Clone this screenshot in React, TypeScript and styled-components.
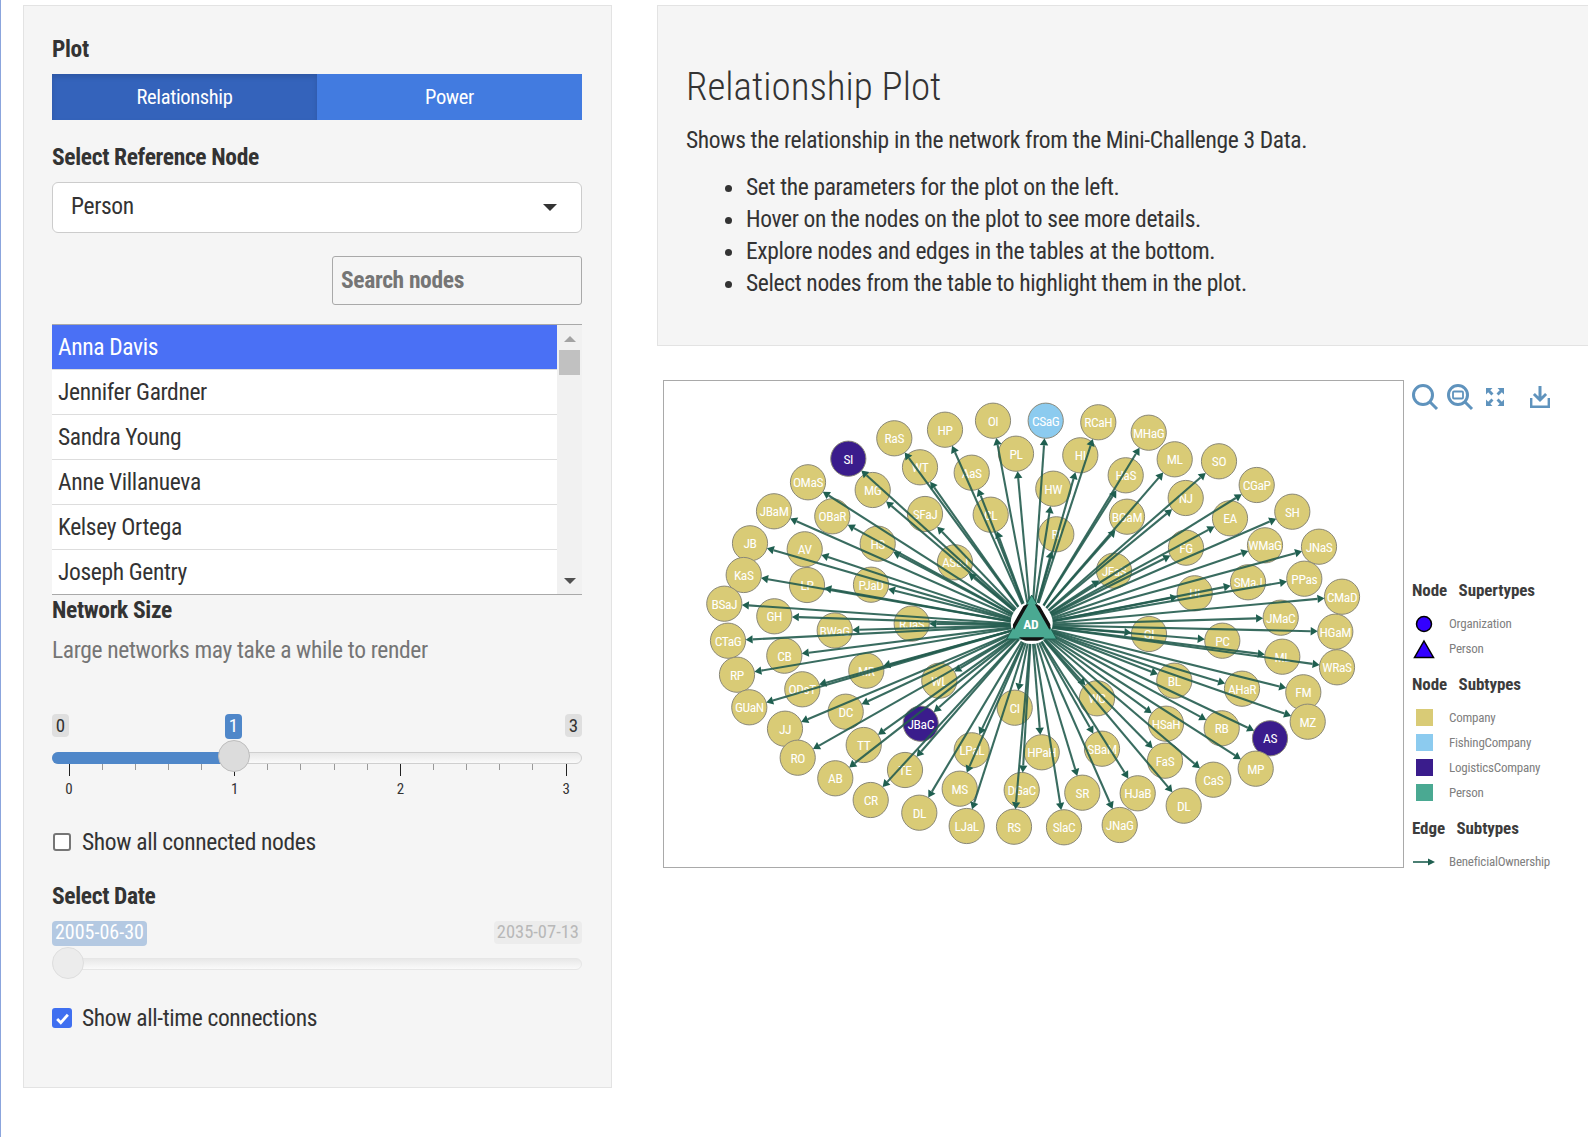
import { createGlobalStyle } from "styled-components";
import styled from "styled-components";
import { Fragment } from "react";

interface GraphNode {
  id: string;
  x: number;
  y: number;
  kind?: "logistics" | "fishing";
}

// positions are page coords, shifted to the plot's corner below
const rawNodes: [string, number, number, GraphNode["kind"]?][] = [
  ["RaS", 894.3, 438.3], ["HP", 945, 429.7], ["OI", 993, 420.7], ["PL", 1016, 453.7],
  ["WT", 920, 467.3], ["AaS", 971.7, 472.7], ["SI", 848.3, 458.7, "logistics"], ["MG", 872.7, 490],
  ["OMaS", 808, 482.3], ["JBaM", 774, 511.3], ["OBaR", 832.3, 516.3], ["SFaJ", 925, 514],
  ["CL", 990.7, 514.7], ["HS", 877.7, 543.7], ["AV", 804.7, 549.3], ["JB", 750, 543.3],
  ["ASaJ", 955, 562.3], ["KaS", 743.7, 575], ["LP", 807, 585], ["PJaD", 871, 584.7],
  ["BSaJ", 724.3, 603.7], ["GH", 774.3, 616.3], ["BWaG", 834.7, 630.5], ["RJaS", 911.7, 623.6],
  ["CSaG", 1045.7, 420.7, "fishing"], ["RCaH", 1098.3, 422.3], ["MHaG", 1148.7, 432.7], ["HI", 1080.3, 455.3],
  ["ML", 1174.7, 459.3], ["SO", 1219, 461.3], ["HaS", 1125.7, 475.3], ["HW", 1053.3, 488.7],
  ["CGaP", 1256.7, 485], ["NJ", 1185.7, 498], ["BGaM", 1127, 516.7], ["EA", 1230, 518.3],
  ["SH", 1292.3, 511.7], ["RI", 1056.3, 534.3], ["WMaG", 1265, 545.3], ["JNaS", 1319, 546.7],
  ["FG", 1186, 547.7], ["JFaS", 1114, 570.7], ["SMaJ", 1248, 582.3], ["PPas", 1304.3, 578.7],
  ["HI", 1194.7, 593.3], ["CMaD", 1342, 596.7], ["JMaC", 1280.7, 617.7], ["CTaG", 728, 640.7],
  ["CB", 784.3, 655.7], ["RP", 737, 674.7], ["MR", 866.3, 670.7], ["WL", 939.3, 680.7],
  ["ODsT", 802.3, 689.3], ["GUaN", 749.3, 707.3], ["DC", 845.7, 711.7], ["CI", 1014.7, 707.7],
  ["JBaC", 920.7, 723.7, "logistics"], ["JJ", 785, 728.7], ["TT", 863.7, 745], ["RO", 797.7, 757.7],
  ["LPaL", 971.7, 750.3], ["TE", 905, 770], ["AB", 835.3, 778.3], ["MS", 959.7, 788.7],
  ["CR", 870.7, 800], ["DL", 919.3, 812.7], ["DGaC", 1021.7, 790], ["LJaL", 966.7, 826],
  ["RS", 1014, 826.7], ["GI", 1149, 634], ["PC", 1222.3, 640.7], ["HGaM", 1335.3, 631.7],
  ["ML", 1282.3, 656.7], ["WRaS", 1337, 667.3], ["BL", 1174.3, 680.7], ["AHaR", 1242, 688.7],
  ["FM", 1303.3, 692.3], ["MZ", 1307.7, 721.7], ["WC", 1097, 698.3], ["HSaH", 1166, 723.7],
  ["RB", 1221.7, 728.3], ["AS", 1270, 738.3, "logistics"], ["HPaH", 1041.7, 752.3], ["SBaM", 1102, 748.7],
  ["FaS", 1165, 760.7], ["MP", 1255.7, 768.7], ["CaS", 1213.3, 779.7], ["SR", 1082.3, 792.7],
  ["HJaB", 1137.7, 793.3], ["DL", 1183.7, 805.7], ["JNaG", 1119.7, 825], ["SlaC", 1064, 827.3],
];

const PLOT_X = 664;
const PLOT_Y = 381;
const CENTER = { x: 1031.5 - PLOT_X, y: 625 - PLOT_Y };
const RADIUS = 17.6;

const nodes: GraphNode[] = rawNodes.map(([id, x, y, kind]) => ({
  id,
  x: x - PLOT_X,
  y: y - PLOT_Y,
  kind,
}));

const nodeFill = (kind?: GraphNode["kind"]) =>
  kind === "logistics" ? "#3a1c8c" : kind === "fishing" ? "#8ccbef" : "#d9cb76";

const people = [
  "Anna Davis",
  "Jennifer Gardner",
  "Sandra Young",
  "Anne Villanueva",
  "Kelsey Ortega",
  "Joseph Gentry",
];

const tasks = [
  "Set the parameters for the plot on the left.",
  "Hover on the nodes on the plot to see more details.",
  "Explore nodes and edges in the tables at the bottom.",
  "Select nodes from the table to highlight them in the plot.",
];

const GlobalStyle = createGlobalStyle`
  html, body {
    margin: 0;
    padding: 0;
    background: #fff;
  }
  body {
    font-family: "Roboto", "Liberation Sans", sans-serif;
    font-stretch: 75%;
    letter-spacing: -0.022em;
    color: #333;
  }
`;

const Page = styled.div`
  width: 1588px;
  height: 1137px;
  box-sizing: border-box;
  border-left: 1px solid #8ba5dd;
  padding: 5px 0 0 22px;
  display: flex;
  align-items: flex-start;
  gap: 45px;
  overflow: hidden;
`;

const Sidebar = styled.aside`
  width: 589px;
  height: 1083px;
  box-sizing: border-box;
  flex: none;
  background: #f5f5f5;
  border: 1px solid #e3e3e3;
  padding: 27px 29px 0 28px;
`;

const Label = styled.div<{ $mt?: number }>`
  font-size: 23.5px;
  font-weight: 700;
  line-height: 32px;
  color: #333;
  margin-top: ${(p) => p.$mt ?? 0}px;
`;

const Tabs = styled.div`
  display: flex;
  height: 46px;
  margin-top: 9px;
`;

const Tab = styled.div<{ $active?: boolean }>`
  flex: 1;
  display: flex;
  align-items: center;
  justify-content: center;
  color: #fff;
  font-size: 20.5px;
  background: ${(p) => (p.$active ? "#3463bb" : "#427be0")};
  box-shadow: ${(p) => (p.$active ? "inset 0 3px 5px rgba(0,0,0,.125)" : "none")};
`;

const Select = styled.div`
  height: 51px;
  box-sizing: border-box;
  margin-top: 9px;
  background: #fff;
  border: 1px solid #ccc;
  border-radius: 6px;
  padding: 0 19px 3px 18px;
  display: flex;
  align-items: center;
  justify-content: space-between;
  font-size: 23.5px;
`;

const Caret = styled.span`
  width: 0;
  height: 0;
  margin: 3px 5px 0 0;
  border-left: 7px solid transparent;
  border-right: 7px solid transparent;
  border-top: 7px solid #333;
`;

const SearchRow = styled.div`
  display: flex;
  justify-content: flex-end;
  margin-top: 23px;
`;

const Search = styled.div`
  width: 250px;
  height: 49px;
  box-sizing: border-box;
  border: 1px solid #a9a9a9;
  border-radius: 3px;
  padding: 0 8px 1px;
  display: flex;
  align-items: center;
  font-size: 23.5px;
  font-weight: 700;
  color: #757575;
`;

const ListBox = styled.div`
  display: flex;
  height: 269px;
  margin-top: 19px;
  border-top: 1px solid #a9a9a9;
  border-bottom: 1px solid #a9a9a9;
`;

const List = styled.ul`
  flex: 1;
  margin: 0;
  padding: 0;
  list-style: none;
  background: #fff;
  overflow: hidden;
`;

const ListItem = styled.li<{ $selected?: boolean }>`
  height: 44px;
  border-bottom: 1px solid #ddd;
  padding: 0 6px;
  display: flex;
  align-items: center;
  font-size: 23.5px;
  color: ${(p) => (p.$selected ? "#fff" : "#333")};
  background: ${(p) => (p.$selected ? "#4a70f5" : "#fff")};
`;

const Scrollbar = styled.div`
  width: 25px;
  flex: none;
  background: #f1f1f1;
  display: flex;
  flex-direction: column;
  align-items: center;
`;

const ScrollArrow = styled.span<{ $down?: boolean }>`
  width: 0;
  height: 0;
  margin-top: ${(p) => (p.$down ? "auto" : "11px")};
  margin-bottom: ${(p) => (p.$down ? "10px" : "0")};
  border-left: 6px solid transparent;
  border-right: 6px solid transparent;
  ${(p) =>
    p.$down ? "border-top: 6px solid #505050;" : "border-bottom: 6px solid #a3a3a3;"}
`;

const ScrollThumb = styled.span`
  width: 21px;
  height: 25px;
  margin-top: 8px;
  background: #c1c1c1;
`;

const Help = styled.div`
  font-size: 23.5px;
  line-height: 32px;
  color: #757575;
  margin-top: 8px;
`;

const SliderBlock = styled.div<{ $mt: number; $h: number }>`
  position: relative;
  height: ${(p) => p.$h}px;
  margin-top: ${(p) => p.$mt}px;
`;

const Badge = styled.span<{ $tone: "grey" | "blue" | "paleBlue" | "paleGrey" }>`
  position: absolute;
  top: 0;
  min-width: 17px;
  box-sizing: border-box;
  text-align: center;
  padding: 0 3px;
  height: ${(p) => (p.$tone === "blue" || p.$tone === "paleBlue" ? 25 : 23)}px;
  line-height: 23px;
  font-size: ${(p) => (p.$tone === "paleBlue" ? 20 : p.$tone === "paleGrey" ? 18.5 : 19)}px;
  letter-spacing: 0;
  border-radius: 4px;
  color: ${(p) =>
    p.$tone === "grey" ? "#333" : p.$tone === "paleGrey" ? "#b8b8b8" : "#fff"};
  background: ${(p) =>
    p.$tone === "grey"
      ? "#dfdfdf"
      : p.$tone === "paleGrey"
      ? "#ececec"
      : p.$tone === "blue"
      ? "#4f87c9"
      : "#b4c9e2"};
`;

const Track = styled.div<{ $faded?: boolean; $top: number }>`
  position: absolute;
  left: 0;
  right: 0;
  top: ${(p) => p.$top}px;
  height: 12px;
  box-sizing: border-box;
  border-radius: 6px;
  border: 1px solid ${(p) => (p.$faded ? "#e6e6e6" : "#cfcfcf")};
  background: linear-gradient(#e8e8e8, #fafafa);
`;

const TrackFill = styled.div`
  position: absolute;
  left: 0;
  top: 38px;
  height: 12px;
  border-radius: 6px 0 0 6px;
  background: #4f87c9;
`;

const Handle = styled.div<{ $faded?: boolean; $top: number }>`
  position: absolute;
  top: ${(p) => p.$top}px;
  width: 32px;
  height: 32px;
  box-sizing: border-box;
  border-radius: 50%;
  background: ${(p) => (p.$faded ? "#ececec" : "#dcdcdc")};
  border: 1px solid ${(p) => (p.$faded ? "#dedede" : "#bdbdbd")};
`;

const Tick = styled.span<{ $major?: boolean }>`
  position: absolute;
  top: 50px;
  width: 1px;
  height: ${(p) => (p.$major ? 12 : 6)}px;
  background: ${(p) => (p.$major ? "#222" : "#999")};
`;

const TickLabel = styled.span`
  position: absolute;
  top: 66px;
  width: 20px;
  margin-left: -10px;
  text-align: center;
  font-size: 15px;
  letter-spacing: 0;
  line-height: 18px;
  color: #333;
`;

const CheckRow = styled.label<{ $mt: number }>`
  display: flex;
  align-items: center;
  height: 32px;
  margin-top: ${(p) => p.$mt}px;
  font-size: 23.5px;
`;

const CheckBox = styled.span<{ $checked?: boolean }>`
  width: ${(p) => (p.$checked ? 20 : 18)}px;
  height: ${(p) => (p.$checked ? 20 : 18)}px;
  box-sizing: border-box;
  flex: none;
  margin: ${(p) => (p.$checked ? "0 10px 0 0" : "0 11px 0 1px")};
  border-radius: 3px;
  display: flex;
  align-items: center;
  justify-content: center;
  background: ${(p) => (p.$checked ? "#3f6ff0" : "#fff")};
  border: ${(p) => (p.$checked ? "none" : "2px solid #767676")};
`;

const Main = styled.main`
  flex: 1;
  min-width: 0;
`;

const InfoPanel = styled.section`
  height: 341px;
  box-sizing: border-box;
  background: #f5f5f5;
  border: 1px solid #e3e3e3;
  border-right: none;
  padding: 56px 28px 0;
`;

const Title = styled.h2`
  margin: 0;
  font-size: 39px;
  font-weight: 300;
  letter-spacing: 0;
  line-height: 50px;
  color: #333;
`;

const Intro = styled.p`
  margin: 12px 0 0;
  font-size: 23.5px;
  line-height: 32px;
`;

const Bullets = styled.ul`
  margin: 15px 0 0;
  padding: 0 0 0 60px;
  font-size: 23.5px;
  line-height: 32px;
`;

const PlotRow = styled.div`
  display: flex;
  margin-top: 34px;
  margin-left: 6px;
`;

const PlotFrame = styled.div`
  width: 741px;
  height: 488px;
  box-sizing: border-box;
  flex: none;
  border: 1px solid #a9a9a9;
  background: #fff;
`;

const NodeLabel = styled.text<{ $bold?: boolean }>`
  font-family: "Roboto", sans-serif;
  font-stretch: 75%;
  font-size: 13.5px;
  font-weight: ${(p) => (p.$bold ? 700 : 400)};
  letter-spacing: -0.03em;
  fill: #fff;
  text-anchor: middle;
  dominant-baseline: central;
`;

const SidePanel = styled.div`
  flex: 1;
  display: flex;
  flex-direction: column;
  padding-left: 8px;
`;

const Toolbar = styled.div`
  display: flex;
  align-items: center;
  height: 32px;
  margin: 1px 0 0 -1px;
  color: #5f93bd;
`;

const ZoomIcon = styled.svg<{ $ml?: number }>`
  margin-left: ${(p) => p.$ml ?? 0}px;
`;

const LegendGroup = styled.div<{ $mt: number }>`
  margin-top: ${(p) => p.$mt}px;
`;

const LegendTitle = styled.div`
  font-size: 17px;
  font-weight: 700;
  letter-spacing: -0.005em;
  line-height: 22px;
  color: #3c3c3c;
  white-space: pre;
`;

const LegendList = styled.div`
  margin-top: 10px;
`;

const LegendItem = styled.div`
  display: flex;
  align-items: center;
  height: 25px;
  font-size: 13px;
  letter-spacing: -0.017em;
  color: #808080;
`;

const LegendMark = styled.span`
  width: 37px;
  flex: none;
  display: flex;
  justify-content: center;
  padding-right: 13px;
  box-sizing: border-box;
`;

const Swatch = styled.span<{ $color: string }>`
  width: 17px;
  height: 17px;
  display: block;
  background: ${(p) => p.$color};
`;

function Plot() {
  const arrows = nodes.map((n) => {
    const dx = n.x - CENTER.x;
    const dy = n.y - CENTER.y;
    const len = Math.hypot(dx, dy);
    const ux = dx / len;
    const uy = dy / len;
    const tipX = n.x - ux * RADIUS;
    const tipY = n.y - uy * RADIUS;
    const baseX = tipX - ux * 7;
    const baseY = tipY - uy * 7;
    return {
      line: `M${CENTER.x} ${CENTER.y}L${baseX.toFixed(1)} ${baseY.toFixed(1)}`,
      head: `M${tipX.toFixed(1)} ${tipY.toFixed(1)}L${(baseX - uy * 4.2).toFixed(1)} ${(baseY + ux * 4.2).toFixed(1)}L${(baseX + uy * 4.2).toFixed(1)} ${(baseY - ux * 4.2).toFixed(1)}Z`,
    };
  });

  const cx = 1031.7 - PLOT_X;
  const triangle = `M${cx} ${595 - PLOT_Y}L${cx + 25} ${639 - PLOT_Y}H${cx - 25}Z`;

  return (
    <svg width="739" height="486" viewBox="0 0 739 486">
      <defs>
        <clipPath id="center-halo">
          <circle cx={cx} cy={623 - PLOT_Y} r="19" />
        </clipPath>
      </defs>
      {nodes.map((n, i) => (
        <Fragment key={i}>
          <circle cx={n.x} cy={n.y} r={RADIUS} fill={nodeFill(n.kind)} stroke="#8a8878" strokeWidth="1" />
          <NodeLabel x={n.x} y={n.y}>{n.id}</NodeLabel>
        </Fragment>
      ))}
      {arrows.map((a, i) => (
        <Fragment key={i}>
          <path d={a.line} stroke="#245c4f" strokeWidth="2.1" strokeOpacity="0.9" fill="none" />
          <path d={a.head} fill="#1f5f50" />
        </Fragment>
      ))}
      <circle cx={cx} cy={623 - PLOT_Y} r="21" fill="#fff" />
      <path d={triangle} fill="#4aa992" stroke="#1f5f50" strokeWidth="1" />
      <path d={triangle} fill="none" stroke="#111" strokeWidth="3.5" clipPath="url(#center-halo)" />
      <NodeLabel $bold x={cx - 1} y={624 - PLOT_Y}>AD</NodeLabel>
    </svg>
  );
}

function Toolbox() {
  return (
    <Toolbar>
      <ZoomIcon width="28" height="28" viewBox="0 0 28 28" fill="none" stroke="currentColor" strokeWidth="3">
        <circle cx="12" cy="12" r="9.5" />
        <path d="M19 19l7 7" />
      </ZoomIcon>
      <ZoomIcon $ml={7} width="28" height="28" viewBox="0 0 28 28" fill="none" stroke="currentColor" strokeWidth="3">
        <circle cx="12" cy="12" r="9.5" />
        <path d="M19 19l7 7" />
        <rect x="7" y="8.5" width="10" height="7" rx="1" strokeWidth="1.8" />
      </ZoomIcon>
      <ZoomIcon $ml={11} width="20" height="20" viewBox="0 0 20 20" fill="currentColor">
        <path d="M1 1h6.5L5.3 3.2 8.5 6.4 6.4 8.5 3.2 5.3 1 7.5zM19 1v6.5l-2.2-2.2-3.2 3.2-2.1-2.1 3.2-3.2L12.5 1zM1 19v-6.5l2.2 2.2 3.2-3.2 2.1 2.1-3.2 3.2L7.5 19zM19 19h-6.5l2.2-2.2-3.2-3.2 2.1-2.1 3.2 3.2 2.2-2.2z" />
      </ZoomIcon>
      <ZoomIcon $ml={25} width="20" height="22" viewBox="0 0 20 22" fill="currentColor">
        <path d="M8.5 0h3v10.5l3.6-3.6 2 2L10 16 2.900 8.900l2-2 3.600 3.600zM0 12h2.400v7.600h15.200V12H20v10H0z" />
      </ZoomIcon>
    </Toolbar>
  );
}

function App() {
  const minorTicks = Array.from({ length: 16 }, (_, i) => i);
  return (
    <Page>
      <GlobalStyle />
      <Sidebar>
        <Label>Plot</Label>
        <Tabs>
          <Tab $active>Relationship</Tab>
          <Tab>Power</Tab>
        </Tabs>
        <Label $mt={21}>Select Reference Node</Label>
        <Select>
          Person
          <Caret />
        </Select>
        <SearchRow>
          <Search>Search nodes</Search>
        </SearchRow>
        <ListBox>
          <List>
            {people.map((name, i) => (
              <ListItem key={name} $selected={i === 0}>
                {name}
              </ListItem>
            ))}
          </List>
          <Scrollbar>
            <ScrollArrow />
            <ScrollThumb />
            <ScrollArrow $down />
          </Scrollbar>
        </ListBox>
        <Label $mt={-1}>Network Size</Label>
        <Help>Large networks may take a while to render</Help>
        <SliderBlock $mt={48} $h={86}>
          <Badge $tone="grey" style={{ left: 0 }}>0</Badge>
          <Badge $tone="blue" style={{ left: 173 }}>1</Badge>
          <Badge $tone="grey" style={{ right: 0 }}>3</Badge>
          <Track $top={38} />
          <TrackFill style={{ width: 182 }} />
          {minorTicks.map((i) => (
            <Tick key={i} $major={i % 5 === 0} style={{ left: 16.5 + i * 33.14 }} />
          ))}
          {[0, 1, 2, 3].map((v) => (
            <TickLabel key={v} style={{ left: 17 + v * 165.7 }}>{v}</TickLabel>
          ))}
          <Handle $top={26} style={{ left: 166 }} />
        </SliderBlock>
        <CheckRow $mt={26}>
          <CheckBox />
          Show all connected nodes
        </CheckRow>
        <Label $mt={22}>Select Date</Label>
        <SliderBlock $mt={9} $h={58}>
          <Badge $tone="paleBlue" style={{ left: 0 }}>2005-06-30</Badge>
          <Badge $tone="paleGrey" style={{ right: 0 }}>2035-07-13</Badge>
          <Track $faded $top={37} />
          <Handle $faded $top={26} style={{ left: 0 }} />
        </SliderBlock>
        <CheckRow $mt={23}>
          <CheckBox $checked>
            <svg width="15" height="15" viewBox="0 0 14 14" fill="none" stroke="#fff" strokeWidth="2.6">
              <path d="M2 7.5l3.4 3.4L12 3.500" />
            </svg>
          </CheckBox>
          Show all-time connections
        </CheckRow>
      </Sidebar>
      <Main>
        <InfoPanel>
          <Title>Relationship Plot</Title>
          <Intro>Shows the relationship in the network from the Mini-Challenge 3 Data.</Intro>
          <Bullets>
            {tasks.map((t) => (
              <li key={t}>{t}</li>
            ))}
          </Bullets>
        </InfoPanel>
        <PlotRow>
          <PlotFrame>
            <Plot />
          </PlotFrame>
          <SidePanel>
            <Toolbox />
            <LegendGroup $mt={166}>
              <LegendTitle>Node   Supertypes</LegendTitle>
              <LegendList>
                <LegendItem>
                  <LegendMark>
                    <svg width="18" height="18" viewBox="0 0 18 18">
                      <circle cx="9" cy="9" r="7.5" fill="#3300ff" stroke="#000" strokeWidth="1.5" />
                    </svg>
                  </LegendMark>
                  Organization
                </LegendItem>
                <LegendItem>
                  <LegendMark>
                    <svg width="22" height="20" viewBox="0 0 22 20">
                      <path d="M11 2l9.5 16.5h-19z" fill="#3300ff" stroke="#000" strokeWidth="1.5" />
                    </svg>
                  </LegendMark>
                  Person
                </LegendItem>
              </LegendList>
            </LegendGroup>
            <LegendGroup $mt={12}>
              <LegendTitle>Node   Subtypes</LegendTitle>
              <LegendList>
                <LegendItem>
                  <LegendMark><Swatch $color="#d9cb76" /></LegendMark>
                  Company
                </LegendItem>
                <LegendItem>
                  <LegendMark><Swatch $color="#8ccbef" /></LegendMark>
                  FishingCompany
                </LegendItem>
                <LegendItem>
                  <LegendMark><Swatch $color="#3a1c8c" /></LegendMark>
                  LogisticsCompany
                </LegendItem>
                <LegendItem>
                  <LegendMark><Swatch $color="#4aa992" /></LegendMark>
                  Person
                </LegendItem>
              </LegendList>
            </LegendGroup>
            <LegendGroup $mt={12}>
              <LegendTitle>Edge   Subtypes</LegendTitle>
              <LegendList>
                <LegendItem>
                  <LegendMark>
                    <svg width="22" height="8" viewBox="0 0 22 8">
                      <path d="M0 4h16" stroke="#1f5f50" strokeWidth="1.6" />
                      <path d="M22 4l-7-3.5v7z" fill="#1f5f50" />
                    </svg>
                  </LegendMark>
                  BeneficialOwnership
                </LegendItem>
              </LegendList>
            </LegendGroup>
          </SidePanel>
        </PlotRow>
      </Main>
    </Page>
  );
}

export default App;
